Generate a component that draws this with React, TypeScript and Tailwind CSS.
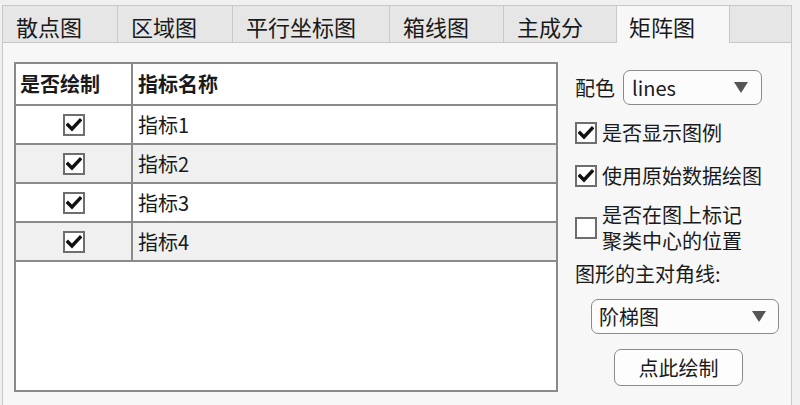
import React from 'react';

const tabs = [
    { label: '散点图', w: 'w-[115px]' },
    { label: '区域图', w: 'w-[115px]' },
    { label: '平行坐标图', w: 'w-[157px]' },
    { label: '箱线图', w: 'w-[114px]' },
    { label: '主成分', w: 'w-[113px]' },
    { label: '矩阵图', w: 'w-[113px]', active: true },
];

const rows = ['指标1', '指标2', '指标3', '指标4'];

function CheckBox({ checked }: { checked: boolean }) {
    return (
        <div className="w-[22px] h-[22px] border-2 border-[#6e6e6e] bg-white flex items-center justify-center">
            {checked && (
                <svg width="16" height="14" viewBox="0 0 16 14">
                    <path d="M2 7 L6 11 L14 2.5" fill="none" stroke="#111111" strokeWidth="3.4" strokeLinecap="square" />
                </svg>
            )}
        </div>
    );
}

function Caret() {
    return (
        <svg width="14" height="11" viewBox="0 0 14 11">
            <path d="M0 0 H14 L7 11 Z" fill="#555555" />
        </svg>
    );
}

export default function App() {
    return (
        <div
            className="w-[800px] h-[405px] overflow-hidden bg-[#f0f0f0] pt-[5px] pl-[2px] text-[#1a1a1a]"
            style={{ fontFamily: '"Noto Sans CJK SC", "Noto Sans", sans-serif' }}
        >
            {/* tab strip */}
            <div className="flex w-[790px] h-[38px] bg-[#e6e6e6] border-t border-l border-r border-[#c8c8c8]">
                {tabs.map((t) => (
                    <div
                        key={t.label}
                        className={
                            t.active
                                ? `${t.w} h-full bg-[#f7f7f7] border-r border-[#c8c8c8] flex items-center pl-[12px] pt-[4px] text-[22px]`
                                : `${t.w} h-full border-r border-b border-[#c8c8c8] flex items-center pl-[13px] pt-[4px] text-[22px]`
                        }
                    >
                        {t.label}
                    </div>
                ))}
                <div className="flex-1 h-full border-b border-[#c8c8c8]" />
            </div>

            {/* panel */}
            <div className="flex w-[790px] h-[362px] bg-[#f7f7f7] border-l border-r border-[#c8c8c8]">
                <div className="ml-[11px] mt-[19px] w-[544px] h-[330px] border-2 border-[#8a8a8a] bg-white flex flex-col text-[20px]">
                    <div className="flex h-[42px] border-b-2 border-[#8a8a8a] font-bold">
                        <div className="w-[117px] border-r-2 border-[#8a8a8a] pl-[4px] flex items-center">是否绘制</div>
                        <div className="flex-1 pl-[5px] flex items-center">指标名称</div>
                    </div>
                    {rows.map((r, i) => (
                        <div
                            key={r}
                            className={`flex h-[39px] border-b-2 border-[#8a8a8a] ${i % 2 === 1 ? 'bg-[#f0f0f0]' : 'bg-white'}`}
                        >
                            <div className="w-[117px] border-r-2 border-[#8a8a8a] flex items-center justify-center">
                                <CheckBox checked />
                            </div>
                            <div className="flex-1 pl-[5px] flex items-center">{r}</div>
                        </div>
                    ))}
                </div>

                <div className="ml-[17px] flex flex-col text-[20px]">
                    <div className="flex items-center mt-[27px] h-[35px]">
                        <span className="w-[48px]">配色</span>
                        <div className="w-[139px] h-[35px] rounded-[7px] border-[1.5px] border-[#8a8a8a] bg-[#fcfcfc] flex items-center justify-between pl-[8px] pr-[13px]">
                            <span>lines</span>
                            <Caret />
                        </div>
                    </div>
                    <div className="flex items-center mt-[16px] h-[24px]">
                        <CheckBox checked />
                        <span className="ml-[5px]">是否显示图例</span>
                    </div>
                    <div className="flex items-center mt-[19px] h-[24px]">
                        <CheckBox checked />
                        <span className="ml-[5px]">使用原始数据绘图</span>
                    </div>
                    <div className="flex items-center mt-[14px]">
                        <CheckBox checked={false} />
                        <div className="ml-[5px] flex flex-col">
                            <div className="h-[26px] leading-[26px]">是否在图上标记</div>
                            <div className="h-[26px] leading-[26px]">聚类中心的位置</div>
                        </div>
                    </div>
                    <div className="mt-[7px] h-[26px] leading-[26px]">图形的主对角线:</div>
                    <div className="ml-[16px] mt-[12px] w-[188px] h-[35px] rounded-[7px] border-[1.5px] border-[#8a8a8a] bg-[#fcfcfc] flex items-center justify-between pl-[7px] pr-[12px]">
                        <span>阶梯图</span>
                        <Caret />
                    </div>
                    <div className="ml-[39px] mt-[15px] w-[129px] h-[37px] rounded-[7px] border-[1.5px] border-[#8a8a8a] bg-[#fdfdfd] flex items-center justify-center">
                        点此绘制
                    </div>
                </div>
            </div>
        </div>
    );
}
